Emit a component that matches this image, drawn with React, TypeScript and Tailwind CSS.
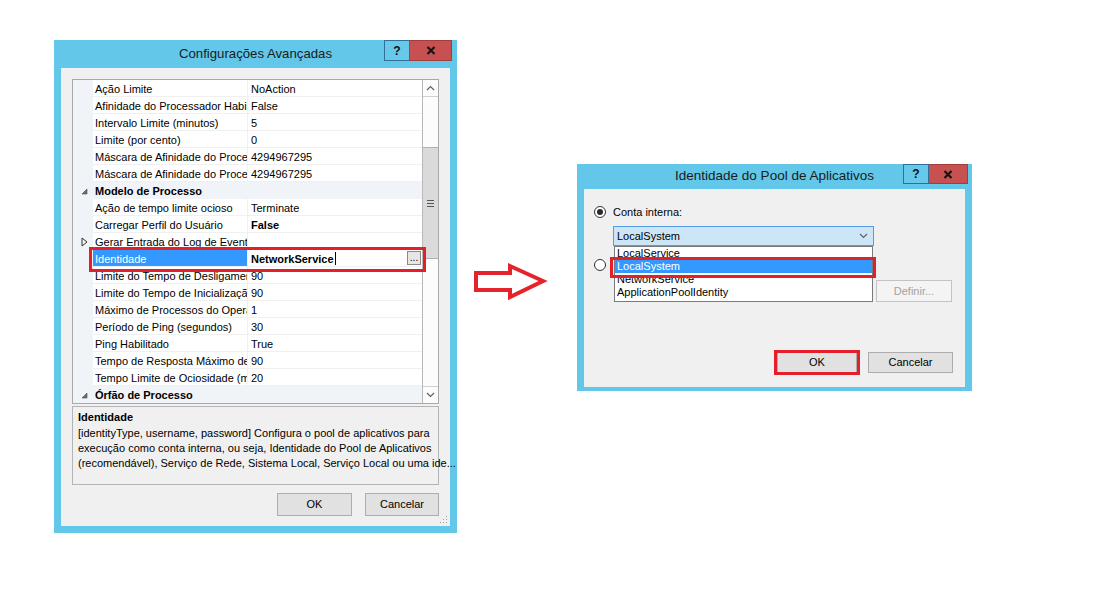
import React from 'react';

type Row = {
  name: string;
  value?: string;
  cat?: boolean;
  bold?: boolean;
  expand?: boolean;
  selected?: boolean;
};

const rows: Row[] = [
  { name: 'Ação Limite', value: 'NoAction' },
  { name: 'Afinidade do Processador Habilitada', value: 'False' },
  { name: 'Intervalo Limite (minutos)', value: '5' },
  { name: 'Limite (por cento)', value: '0' },
  { name: 'Máscara de Afinidade do Processador', value: '4294967295' },
  { name: 'Máscara de Afinidade do Processador (64 bits)', value: '4294967295' },
  { name: 'Modelo de Processo', cat: true },
  { name: 'Ação de tempo limite ocioso', value: 'Terminate' },
  { name: 'Carregar Perfil do Usuário', value: 'False', bold: true },
  { name: 'Gerar Entrada do Log de Eventos', value: '', expand: true },
  { name: 'Identidade', value: 'NetworkService', selected: true },
  { name: 'Limite do Tempo de Desligamento (segundos)', value: '90' },
  { name: 'Limite do Tempo de Inicialização (segundos)', value: '90' },
  { name: 'Máximo de Processos do Operador', value: '1' },
  { name: 'Período de Ping (segundos)', value: '30' },
  { name: 'Ping Habilitado', value: 'True' },
  { name: 'Tempo de Resposta Máximo de Ping (segundos)', value: '90' },
  { name: 'Tempo Limite de Ociosidade (minutos)', value: '20' },
  { name: 'Órfão de Processo', cat: true },
];

const TitleButtons = ({ tall }: { tall: boolean }) => (
  <div className="flex">
    <div
      className={`w-[26px] ${tall ? 'h-[21px]' : 'h-[20px]'} border border-[#2f6f99] bg-[#66c9ea] flex items-center justify-center text-[12px] font-bold text-[#111] leading-none`}
    >
      ?
    </div>
    <div
      className={`${tall ? 'w-[42px] h-[21px]' : 'w-[39px] h-[20px]'} bg-[#c75050] border border-[#a23d3d] border-l-0 flex items-center justify-center`}
    >
      <svg width="10" height="9" viewBox="0 0 10 9">
        <path d="M1.5 1 L8.5 8 M8.5 1 L1.5 8" stroke="#151515" strokeWidth="2.2" />
      </svg>
    </div>
  </div>
);

const Chevron = ({ up }: { up?: boolean }) => (
  <svg width="9" height="6" viewBox="0 0 9 6">
    <path d={up ? 'M1 5 L4.5 1.5 L8 5' : 'M1 1 L4.5 4.5 L8 1'} stroke="#606060" strokeWidth="1.2" fill="none" />
  </svg>
);

const CatGlyph = () => (
  <svg width="7" height="7" viewBox="0 0 7 7">
    <path d="M6 1 L6 6 L1 6 Z" fill="#6e6e6e" stroke="#4a4a4a" strokeWidth="0.6" />
  </svg>
);

const ExpandGlyph = () => (
  <svg width="7" height="10" viewBox="0 0 7 10">
    <path d="M1 1 L6 5 L1 9 Z" fill="none" stroke="#333" strokeWidth="1" />
  </svg>
);

const Radio = ({ checked }: { checked?: boolean }) => (
  <div className="w-[12px] h-[12px] rounded-full border border-[#333] bg-white flex items-center justify-center">
    {checked && <div className="w-[6px] h-[6px] rounded-full bg-[#2b2b2b]" />}
  </div>
);

const GridRow = ({ row }: { row: Row }) => {
  if (row.cat) {
    return (
      <div className="h-[17px] flex bg-[#f0f3f7] leading-[18px]">
        <div className="w-[20px] flex items-center justify-center pl-[2px] pt-[1px]">
          <CatGlyph />
        </div>
        <div className="pl-[2px] font-bold">{row.name}</div>
      </div>
    );
  }
  return (
    <div className="h-[17px] flex leading-[18px]">
      <div className="w-[20px] bg-[#f0f3f7] flex items-center justify-center pl-[2px] pt-[1px]">
        {row.expand && <ExpandGlyph />}
      </div>
      <div
        className={`w-[154px] border-b border-[#f0f0f0] pl-[2px] overflow-hidden whitespace-nowrap ${
          row.selected ? 'bg-[#3399ff] text-white' : ''
        }`}
      >
        {row.name}
      </div>
      <div className="w-px bg-[#f0f0f0]" />
      <div className="flex-1 border-b border-[#f0f0f0] pl-[3px] flex items-start whitespace-nowrap overflow-hidden">
        <span className={row.bold || row.selected ? 'font-bold' : ''}>{row.value}</span>
        {row.selected && (
          <>
            <div className="w-px h-[13px] bg-black ml-[1px] self-center" />
            <div className="flex-1" />
            <div className="w-[14px] h-[14px] mr-[1px] self-center bg-[#e6e6e6] border border-[#8a8a8a] flex items-end justify-center leading-[8px] text-[10px] pb-[2px]">
              ...
            </div>
          </>
        )}
      </div>
    </div>
  );
};

const Scrollbar = () => (
  <div className="w-[16px] border-l border-[#b8b8b8] bg-[#fcfcfc] flex flex-col">
    <div className="h-[17px] border-b border-[#d0d0d0] flex items-center justify-center">
      <Chevron up />
    </div>
    <div className="h-[50px]" />
    <div className="h-[112px] bg-[#dadada] border-y border-[#b0b0b0] flex flex-col items-center justify-center gap-[2px]">
      <div className="w-[7px] h-px bg-[#555]" />
      <div className="w-[7px] h-px bg-[#555]" />
      <div className="w-[7px] h-px bg-[#555]" />
    </div>
    <div className="flex-1" />
    <div className="h-[17px] border-t border-[#d0d0d0] flex items-center justify-center">
      <Chevron />
    </div>
  </div>
);

const WinButton = ({ label, w, disabled }: { label: string; w: string; disabled?: boolean }) => (
  <div
    className={`${w} h-full flex items-center justify-center border ${
      disabled ? 'bg-[#f4f4f4] border-[#c3c3c3] text-[#a2a2a2]' : 'bg-[#e1e1e1] border-[#adadad] text-black'
    }`}
  >
    {label}
  </div>
);

const AdvancedSettings = () => (
  <div className="w-[403px] h-[493px] shrink-0 bg-[#62c7e9] flex flex-col">
    <div className="h-[28px] relative flex items-center justify-center">
      <span className="text-[13.2px] text-[#1b1b1b]">Configurações Avançadas</span>
      <div className="absolute right-[5px] top-0">
        <TitleButtons tall />
      </div>
    </div>
    <div className="mx-[7px] mb-[7px] flex-1 bg-[#f0f0f0] relative px-[11px] pt-[11px] flex flex-col text-[11px] text-black">
      <div className="h-[325px] border border-[#a8a8a8] bg-white flex relative">
        <div className="flex-1 flex flex-col">
          {rows.map((r) => (
            <GridRow key={r.name} row={r} />
          ))}
        </div>
        <Scrollbar />
        <div className="absolute left-[16px] top-[167px] w-[337px] h-[25px] border-[3px] border-[#e3202a]" />
      </div>
      <div className="mt-[2px] h-[79px] border border-[#b4b4b4] px-[5px] pt-[2px] leading-[15px]">
        <div className="font-bold h-[17px] leading-[17px]">Identidade</div>
        <div>[identityType, username, password] Configura o pool de aplicativos para</div>
        <div>execução como conta interna, ou seja, Identidade do Pool de Aplicativos</div>
        <div className="whitespace-nowrap">(recomendável), Serviço de Rede, Sistema Local, Serviço Local ou uma ide...</div>
      </div>
      <div className="mt-[8px] h-[23px] flex justify-end gap-[13px]">
        <WinButton label="OK" w="w-[75px]" />
        <WinButton label="Cancelar" w="w-[74px]" />
      </div>
      <svg className="absolute right-[2px] bottom-[2px]" width="8" height="8" viewBox="0 0 8 8">
        <rect x="6" y="0" width="1" height="1" fill="#a0a0a0" />
        <rect x="3" y="3" width="1" height="1" fill="#a0a0a0" />
        <rect x="6" y="3" width="1" height="1" fill="#a0a0a0" />
        <rect x="0" y="6" width="1" height="1" fill="#a0a0a0" />
        <rect x="3" y="6" width="1" height="1" fill="#a0a0a0" />
        <rect x="6" y="6" width="1" height="1" fill="#a0a0a0" />
      </svg>
    </div>
  </div>
);

const listItems = ['LocalService', 'LocalSystem', 'NetworkService', 'ApplicationPoolIdentity'];

const PoolIdentity = () => (
  <div className="w-[395px] h-[227px] shrink-0 ml-[29px] mt-[124px] bg-[#62c7e9] flex flex-col">
    <div className="h-[25px] relative flex items-center justify-center">
      <span className="text-[13.5px] text-[#1b1b1b]">Identidade do Pool de Aplicativos</span>
      <div className="absolute right-[4px] top-0">
        <TitleButtons tall={false} />
      </div>
    </div>
    <div className="mx-[7px] mb-[4px] flex-1 bg-[#f0f0f0] relative pl-[10px] flex flex-col text-[11px] text-black">
      <div className="mt-[17px] h-[12px] flex items-center gap-[7px]">
        <Radio checked />
        <span>Conta interna:</span>
      </div>
      <div className="mt-[8px] ml-[19px] w-[261px] h-[20px] border border-[#569de5] bg-[#cde6f7] flex items-center justify-between pl-[3px] pr-[5px]">
        <span>LocalSystem</span>
        <Chevron />
      </div>
      <div className="mt-[13px] h-[12px] flex">
        <Radio />
      </div>
      <div className="mt-[9px] ml-[282px] h-[22px] flex">
        <WinButton label="Definir..." w="w-[76px]" disabled />
      </div>
      <div className="mt-[50px] ml-[183px] h-[21px] flex gap-[11px]">
        <div className="relative h-full">
          <WinButton label="OK" w="w-[80px]" />
          <div className="absolute -left-[3px] -right-[3px] -top-[2px] -bottom-[2px] border-[3px] border-[#e3202a]" />
        </div>
        <WinButton label="Cancelar" w="w-[85px]" />
      </div>

      <div className="absolute left-[30px] top-[57px] w-[259px] h-[56px] bg-white border border-[#7a7a7a] flex flex-col overflow-hidden">
        {listItems.map((item) => (
          <div
            key={item}
            className={`h-[13px] leading-[13px] pl-[2px] whitespace-nowrap overflow-hidden ${
              item === 'LocalSystem' ? 'bg-[#3399ff] text-white' : ''
            }`}
          >
            {item}
          </div>
        ))}
      </div>
      <div className="absolute left-[26px] top-[68px] w-[266px] h-[21px] border-[3px] border-[#e3202a]" />
    </div>
  </div>
);

const Arrow = () => (
  <svg className="shrink-0 ml-[15px] mt-[221px]" width="76" height="40" viewBox="472 261 76 40">
    <polygon
      points="476,273 510,273 510,266 543,281 510,297 510,290 476,290"
      fill="white"
      stroke="#e5232b"
      strokeWidth="4"
    />
  </svg>
);

export default function App() {
  return (
    <div className="w-[1106px] h-[601px] bg-white flex items-start pl-[54px] pt-[40px] overflow-hidden font-['Liberation_Sans',Arial,sans-serif]">
      <AdvancedSettings />
      <Arrow />
      <PoolIdentity />
    </div>
  );
}
